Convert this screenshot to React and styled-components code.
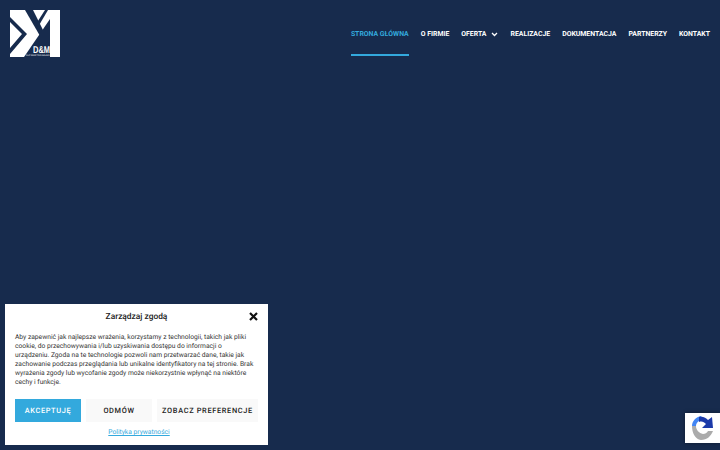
import React from 'react';
import styled, { createGlobalStyle } from 'styled-components';

const links = [
  { label: 'STRONA GŁÓWNA', active: true },
  { label: 'O FIRMIE' },
  { label: 'OFERTA', caret: true },
  { label: 'REALIZACJE' },
  { label: 'DOKUMENTACJA' },
  { label: 'PARTNERZY' },
  { label: 'KONTAKT' },
];

const Logo = () => (
  <svg width="50" height="47" viewBox="0 0 50 47">
    <path fill="#fff" d="M0 0H50V47H0Z" />
    <path fill="#172b4d" d="M15 0H23L34 22L30 26Z" />
    <path fill="#172b4d" d="M0 7L17 24L0 44V38L12 24L0 12Z" />
    <path fill="#172b4d" d="M14 47L40 9V47Z" />
    <path fill="#172b4d" d="M35 0H38L28 17L26 14Z" />
    <text x="23" y="43" fill="#fff" fontFamily="Liberation Sans, sans-serif" fontWeight="700" fontSize="10" textLength="17" lengthAdjust="spacingAndGlyphs">D&amp;M</text>
    <text x="16" y="46.4" fill="#fff" fontFamily="Liberation Sans, sans-serif" fontSize="2.2" textLength="24" lengthAdjust="spacingAndGlyphs">FLAT ROOF TECHNOLOGY</text>
  </svg>
);

const Caret = () => (
  <svg width="7" height="5" viewBox="0 0 7 5">
    <path d="M1 1l2.5 2.5L6 1" fill="none" stroke="#fff" strokeWidth="1.3" />
  </svg>
);

const CloseIcon = () => (
  <svg width="9" height="9" viewBox="0 0 9 9">
    <path d="M1 1l7 7M8 1l-7 7" stroke="#111" strokeWidth="2.2" />
  </svg>
);

const RecaptchaIcon = () => (
  <svg width="22" height="24" viewBox="0 0 22 24">
    <path fill="#ababab" d="M0 10H4C4 14 7 17 11 18C13 18 15 17 16 15H21C19 20 15 24 9 24C3 23 0 17 0 10Z" />
    <path fill="#4285f4" d="M0 10C0 5 4 1 9 0L12 4L7 5C5 6 4 8 4 10Z" />
    <path fill="#1c3aa9" d="M7 1C11 0 14 2 16 4L20 1L21 12H10L14 8C12 6 10 5 7 6Z" />
  </svg>
);

export default function App() {
  return (
    <>
      <GlobalStyle />
      <Page>
        <Header>
          <LogoLink href="#"><Logo /></LogoLink>
          <Nav>
            {links.map((link) => (
              <NavLink key={link.label} href="#" $active={link.active}>
                {link.label}
                {link.caret && <CaretWrap><Caret /></CaretWrap>}
              </NavLink>
            ))}
          </Nav>
        </Header>
      </Page>

      <Dialog>
        <DialogHead>
          <DialogTitle>Zarządzaj zgodą</DialogTitle>
          <CloseButton><CloseIcon /></CloseButton>
        </DialogHead>
        <Message>
          Aby zapewnić jak najlepsze wrażenia, korzystamy z technologii, takich jak pliki<br />
          cookie, do przechowywania i/lub uzyskiwania dostępu do informacji o<br />
          urządzeniu. Zgoda na te technologie pozwoli nam przetwarzać dane, takie jak<br />
          zachowanie podczas przeglądania lub unikalne identyfikatory na tej stronie. Brak<br />
          wyrażenia zgody lub wycofanie zgody może niekorzystnie wpłynąć na niektóre<br />
          cechy i funkcje.
        </Message>
        <Buttons>
          <Button $primary>AKCEPTUJĘ</Button>
          <Button>ODMÓW</Button>
          <Button $wide>ZOBACZ PREFERENCJE</Button>
        </Buttons>
        <Policy href="#">Polityka prywatności</Policy>
      </Dialog>

      <Recaptcha>
        <RecaptchaIcon />
      </Recaptcha>
    </>
  );
}

const GlobalStyle = createGlobalStyle`
  html, body {
    margin: 0;
    padding: 0;
    height: 100%;
    overflow: hidden;
    background: #172b4d;
  }
  body {
    font-family: "Roboto", "Open Sans", sans-serif;
    text-rendering: geometricPrecision;
  }
`;

const Page = styled.div`
  height: 450px;
  background: #172b4d;
`;

const Header = styled.header`
  display: flex;
  justify-content: space-between;
  align-items: flex-start;
  padding: 10px 10px 0;
`;

const LogoLink = styled.a`
  display: block;
  height: 47px;
`;

const Nav = styled.nav`
  display: flex;
  gap: 12px;
`;

const NavLink = styled.a`
  display: flex;
  align-items: center;
  height: 46px;
  padding-top: 4px;
  box-sizing: border-box;
  font-size: 6.9px;
  font-weight: 700;
  text-decoration: none;
  white-space: nowrap;
  color: ${(p) => (p.$active ? '#33a9dd' : '#fff')};
  border-bottom: 2px solid ${(p) => (p.$active ? '#33a9dd' : 'transparent')};
`;

const CaretWrap = styled.span`
  display: inline-flex;
  margin-left: 5px;
`;

const Dialog = styled.div`
  position: fixed;
  left: 5px;
  bottom: 5px;
  width: 263px;
  height: 141px;
  box-sizing: border-box;
  padding: 0 10px;
  background: #fff;
  display: flex;
  flex-direction: column;
`;

const DialogHead = styled.div`
  position: relative;
  height: 25px;
  display: flex;
  align-items: center;
  justify-content: center;
`;

const DialogTitle = styled.div`
  font-size: 8.4px;
  font-weight: 500;
  color: #222;
`;

const CloseButton = styled.span`
  position: absolute;
  right: 0;
  top: 8px;
  display: flex;
`;

const Message = styled.p`
  margin: 4px 0 0;
  font-size: 6.7px;
  line-height: 9px;
  color: #333;
  height: 54px;
  white-space: nowrap;
`;

const Buttons = styled.div`
  display: flex;
  gap: 5px;
  margin-top: 12px;
`;

const Button = styled.div`
  width: ${(p) => (p.$wide ? '101px' : '66px')};
  height: 23px;
  display: flex;
  align-items: center;
  justify-content: center;
  font-size: 7.4px;
  font-weight: 500;
  letter-spacing: 0.65px;
  white-space: nowrap;
  background: ${(p) => (p.$primary ? '#33a9dd' : '#f9f9f9')};
  color: ${(p) => (p.$primary ? '#fff' : '#222')};
`;

const Policy = styled.a`
  margin-top: 6px;
  padding-left: 5px;
  text-align: center;
  font-size: 6.7px;
  color: #33a9dd;
`;

const Recaptcha = styled.div`
  position: fixed;
  right: 0;
  bottom: 7px;
  width: 35px;
  height: 30px;
  background: #fff;
  box-shadow: 0 0 4px rgba(0, 0, 0, 0.4);
  display: flex;
  align-items: center;
  padding-left: 7px;
  box-sizing: border-box;
`;
